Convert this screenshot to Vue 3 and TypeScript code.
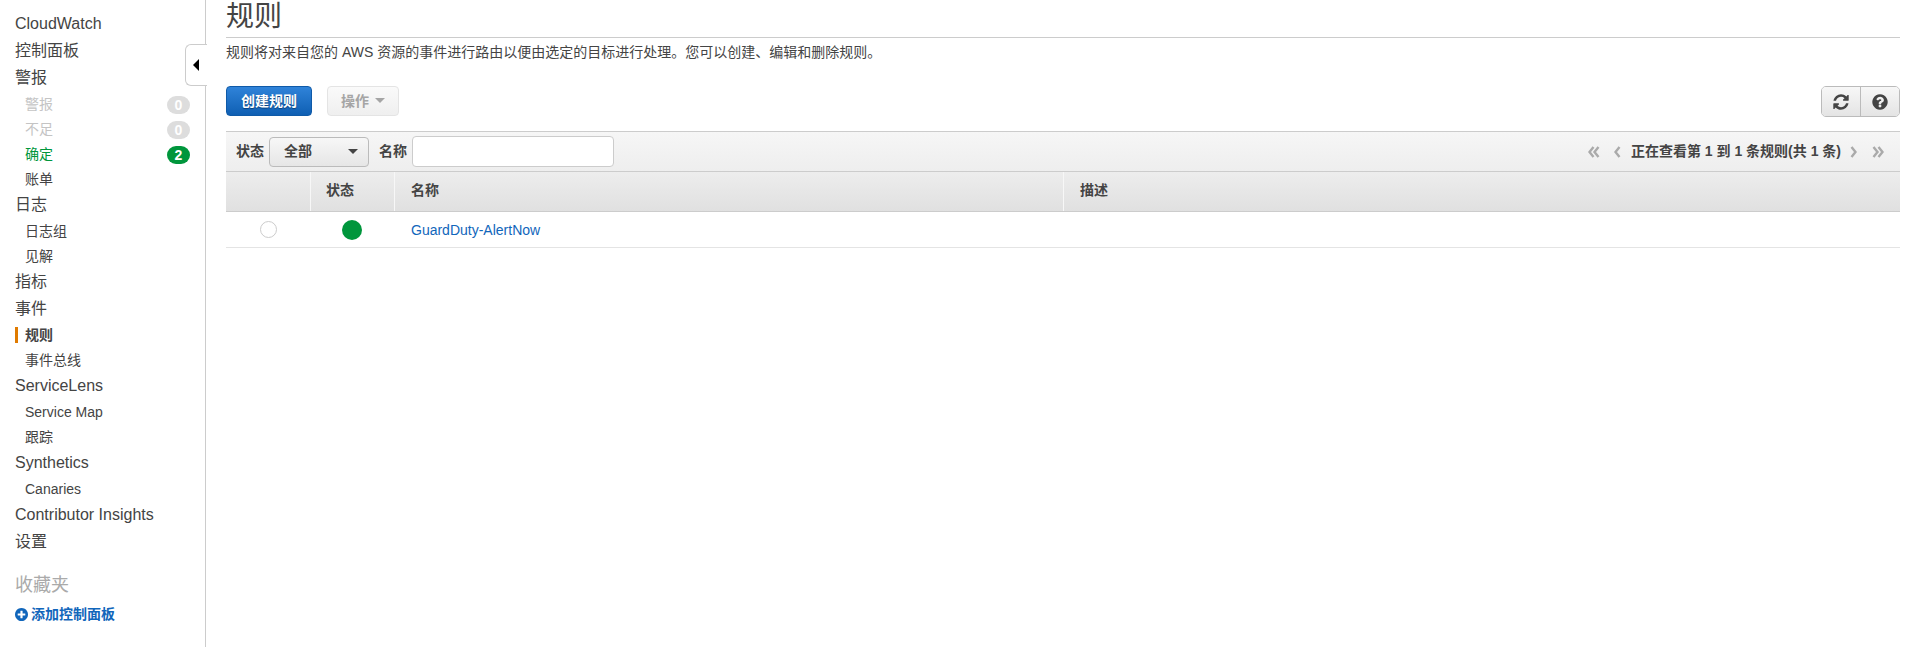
<script setup lang="ts">
interface NavItem {
  label: string
  sub?: boolean
  tone?: 'muted' | 'ok'
  badge?: number
  active?: boolean
}

const nav: NavItem[] = [
  { label: 'CloudWatch' },
  { label: '控制面板' },
  { label: '警报' },
  { label: '警报', sub: true, tone: 'muted', badge: 0 },
  { label: '不足', sub: true, tone: 'muted', badge: 0 },
  { label: '确定', sub: true, tone: 'ok', badge: 2 },
  { label: '账单', sub: true },
  { label: '日志' },
  { label: '日志组', sub: true },
  { label: '见解', sub: true },
  { label: '指标' },
  { label: '事件' },
  { label: '规则', sub: true, active: true },
  { label: '事件总线', sub: true },
  { label: 'ServiceLens' },
  { label: 'Service Map', sub: true },
  { label: '跟踪', sub: true },
  { label: 'Synthetics' },
  { label: 'Canaries', sub: true },
  { label: 'Contributor Insights' },
  { label: '设置' }
]
</script>

<template>
  <div class="page">
    <aside class="sidebar">
      <nav class="nav">
        <div
          v-for="(item, i) in nav"
          :key="i"
          class="nav-item"
          :class="{ sub: item.sub, top: !item.sub, muted: item.tone === 'muted', ok: item.tone === 'ok', active: item.active }"
        >
          <span class="nav-label">{{ item.label }}</span>
          <span v-if="item.badge !== undefined" class="badge" :class="{ 'badge-ok': item.tone === 'ok' }">{{ item.badge }}</span>
        </div>
      </nav>
      <div class="fav-title">收藏夹</div>
      <div class="fav-add">
        <svg class="plus" viewBox="128 128 1536 1536" aria-hidden="true">
          <path fill="#1166bb" d="M1344 960v-128q0-26-19-45t-45-19h-256v-256q0-26-19-45t-45-19h-128q-26 0-45 19t-19 45v256h-256q-26 0-45 19t-19 45v128q0 26 19 45t45 19h256v256q0 26 19 45t45 19h128q26 0 45-19t19-45v-256h256q26 0 45-19t19-45zm320-64q0 209-103 385.5t-279.5 279.5-385.5 103-385.5-103-279.5-279.5-103-385.5 103-385.5 279.5-279.5 385.5-103 385.5 103 279.5 279.5 103 385.5z" />
        </svg>
        <span>添加控制面板</span>
      </div>
      <div class="collapse-tab"><span class="collapse-arrow"></span></div>
    </aside>

    <main class="main">
      <h1 class="title">规则</h1>
      <p class="desc">规则将对来自您的 AWS 资源的事件进行路由以便由选定的目标进行处理。您可以创建、编辑和删除规则。</p>

      <div class="actions">
        <button class="btn-primary" type="button">创建规则</button>
        <button class="btn-disabled" type="button">操作<span class="caret caret-light"></span></button>
        <div class="spacer"></div>
        <div class="btn-group">
          <button class="btn-icon" type="button" aria-label="刷新">
            <svg viewBox="0 0 1792 1792" aria-hidden="true"><path fill="#444" d="M1639 1056q0 5-1 7-64 268-268 434.5t-478 166.5q-146 0-282.5-55t-243.5-157l-129 129q-19 19-45 19t-45-19-19-45v-448q0-26 19-45t45-19h448q26 0 45 19t19 45-19 45l-137 137q71 66 161 102t187 36q134 0 250-65t186-179q11-17 53-117 8-23 30-23h192q13 0 22.5 9.5t9.5 22.5zm25-800v448q0 26-19 45t-45 19h-448q-26 0-45-19t-19-45 19-45l138-138q-148-137-349-137-134 0-250 65t-186 179q-11 17-53 117-8 23-30 23h-199q-13 0-22.5-9.5t-9.5-22.5v-7q65-268 270-434.5t480-166.5q146 0 284 55.5t245 156.5l130-129q19-19 45-19t45 19 19 45z" /></svg>
          </button>
          <button class="btn-icon" type="button" aria-label="帮助">
            <svg viewBox="0 0 1792 1792" aria-hidden="true"><path fill="#444" d="M1024 1376v-192q0-14-9-23t-23-9h-192q-14 0-23 9t-9 23v192q0 14 9 23t23 9h192q14 0 23-9t9-23zm256-672q0-88-55.5-163t-138.5-116-170-41q-243 0-371 213-15 24 8 42l132 100q7 6 19 6 16 0 25-12 53-68 86-92 34-24 86-24 48 0 85.5 26t37.5 59q0 38-20 61t-68 45q-63 28-115.5 86.5t-52.5 125.5v36q0 14 9 23t23 9h192q14 0 23-9t9-23q0-19 21.5-49.5t54.5-49.5q32-18 49-28.5t46-35 44.5-48 28-60.5 12.5-81zm384 192q0 209-103 385.5t-279.5 279.5-385.5 103-385.5-103-279.5-279.5-103-385.5 103-385.5 279.5-279.5 385.5-103 385.5 103 279.5 279.5 103 385.5z" /></svg>
          </button>
        </div>
      </div>

      <section class="table">
        <div class="filter-bar">
          <label class="filter-label">状态</label>
          <div class="select"><span class="select-text">全部</span><span class="caret"></span></div>
          <label class="filter-label name-label">名称</label>
          <div class="input"></div>
          <div class="spacer"></div>
          <div class="pager">
            <svg class="pg" viewBox="0 0 12 12" aria-hidden="true"><path d="M5.500 1 1.500 6l4 5M10.500 1l-4 5 4 5" /></svg>
            <svg class="pg pg-single" viewBox="0 0 7 12" aria-hidden="true"><path d="M5.500 1 1.500 6l4 5" /></svg>
            <span class="pg-text">正在查看第 1 到 1 条规则(共 1 条)</span>
            <svg class="pg pg-single pg-next" viewBox="0 0 7 12" aria-hidden="true"><path d="M1.500 1l4 5-4 5" /></svg>
            <svg class="pg" viewBox="0 0 12 12" aria-hidden="true"><path d="M1.500 1l4 5-4 5M6.500 1l4 5-4 5" /></svg>
          </div>
        </div>
        <div class="thead">
          <div class="th"></div>
          <div class="th name">状态</div>
          <div class="th name">名称</div>
          <div class="th name">描述</div>
        </div>
        <div class="tr">
          <div class="td center"><span class="radio"></span></div>
          <div class="td center"><span class="dot"></span></div>
          <div class="td name"><a class="link">GuardDuty-AlertNow</a></div>
          <div class="td"></div>
        </div>
      </section>
    </main>
  </div>
</template>

<style scoped>
.page {
  display: flex;
  height: 647px;
  overflow: hidden;
  background: #fff;
  color: #444;
  font-family: "Liberation Sans", "Noto Sans CJK SC", sans-serif;
}

.sidebar {
  position: relative;
  box-sizing: border-box;
  width: 206px;
  flex: none;
  border-right: 1px solid #ccc;
  padding: 11px 15px 0;
}

.nav-item {
  display: flex;
  align-items: center;
  justify-content: space-between;
  height: 25px;
  line-height: 25px;
}

.nav-item.top {
  font-size: 16px;
  margin-bottom: 2px;
}

.nav-item.sub {
  font-size: 14px;
  padding-left: 10px;
}

.nav-item.muted .nav-label {
  color: #c4c4c4;
}

.nav-item.ok .nav-label {
  color: #00963c;
}

.nav-item.active {
  position: relative;
  font-weight: 700;
}

.nav-item.active::before {
  content: "";
  position: absolute;
  left: 0;
  top: 4px;
  width: 3px;
  height: 16px;
  background: #e07b00;
}

.badge {
  box-sizing: border-box;
  width: 23px;
  height: 18px;
  border-radius: 9px;
  background: #ddd;
  color: #fff;
  font-size: 14px;
  font-weight: 700;
  line-height: 18px;
  text-align: center;
}

.badge-ok {
  background: #00963c;
}

.fav-title {
  margin-top: 18px;
  color: #aaa;
  font-size: 18px;
  line-height: 26px;
}

.fav-add {
  display: flex;
  align-items: center;
  gap: 3px;
  margin-top: 4px;
  color: #1166bb;
  font-size: 14px;
  font-weight: 700;
  line-height: 24px;
}

.plus {
  width: 13px;
  height: 13px;
  flex: none;
}

.collapse-tab {
  position: absolute;
  left: 185px;
  top: 44px;
  box-sizing: border-box;
  width: 22px;
  height: 42px;
  background: #fff;
  border: 1px solid #ccc;
  border-right: none;
  border-radius: 6px 0 0 6px;
}

.collapse-arrow {
  position: absolute;
  left: 7px;
  top: 14px;
  width: 0;
  height: 0;
  border-top: 6px solid transparent;
  border-bottom: 6px solid transparent;
  border-right: 6px solid #000;
}

.main {
  flex: 1;
  min-width: 0;
  padding: 0 20px;
}

.title {
  box-sizing: content-box;
  height: 37px;
  margin: 0;
  border-bottom: 1px solid #ccc;
  font-size: 28px;
  font-weight: 400;
  line-height: 34px;
}

.desc {
  margin: 0;
  padding-top: 4px;
  font-size: 14px;
  line-height: 20px;
}

.actions {
  display: flex;
  align-items: flex-start;
  margin-top: 24px;
  height: 30px;
}

.spacer {
  flex: 1;
}

button {
  font-family: inherit;
  padding: 0;
  cursor: pointer;
}

.btn-primary {
  box-sizing: border-box;
  width: 86px;
  height: 30px;
  padding-bottom: 2px;
  border: 1px solid #0f5aa8;
  border-radius: 4px;
  background: linear-gradient(#2f83d9, #0f5fb3);
  color: #fff;
  font-size: 14px;
  font-weight: 700;
  text-shadow: 0 1px 1px #0a3f7a;
}

.btn-disabled {
  display: flex;
  align-items: center;
  justify-content: center;
  gap: 6px;
  box-sizing: border-box;
  width: 72px;
  height: 30px;
  margin-left: 15px;
  padding-bottom: 2px;
  border: 1px solid #e4e4e4;
  border-radius: 4px;
  background: linear-gradient(#fafafa, #efefef);
  color: #a5a5a5;
  font-size: 14px;
  font-weight: 700;
}

.caret {
  width: 0;
  height: 0;
  border-left: 5px solid transparent;
  border-right: 5px solid transparent;
  border-top: 5px solid #444;
}

.caret-light {
  border-top-color: #a5a5a5;
}

.btn-group {
  display: flex;
  box-sizing: border-box;
  width: 79px;
  height: 31px;
  border: 1px solid #bbb;
  border-radius: 5px;
  overflow: hidden;
}

.btn-icon {
  display: flex;
  align-items: center;
  justify-content: center;
  flex: 1;
  border: none;
  background: linear-gradient(#f7f7f7, #e4e4e4);
}

.btn-icon + .btn-icon {
  border-left: 1px solid #bbb;
}

.btn-icon svg {
  width: 18px;
  height: 18px;
}

.table {
  margin-top: 15px;
}

.filter-bar {
  display: flex;
  align-items: center;
  box-sizing: border-box;
  height: 41px;
  padding: 0 16px 0 10px;
  border-top: 1px solid #ccc;
  border-bottom: 1px solid #ccc;
  background: linear-gradient(#f6f6f6, #eee);
  font-size: 14px;
  font-weight: 700;
}

.filter-label,
.select-text {
  line-height: 20px;
  padding-bottom: 2px;
}

.name-label {
  margin-left: 10px;
}

.select {
  display: flex;
  align-items: center;
  justify-content: space-between;
  box-sizing: border-box;
  width: 100px;
  height: 30px;
  margin-left: 5px;
  padding: 0 10px 0 14px;
  border: 1px solid #bbb;
  border-radius: 4px;
  background: linear-gradient(#f7f7f7, #e6e6e6);
}

.input {
  box-sizing: border-box;
  width: 202px;
  height: 31px;
  margin-left: 5px;
  border: 1px solid #ccc;
  border-radius: 4px;
  background: #fff;
}

.pager {
  display: flex;
  align-items: center;
}

.pg {
  width: 12px;
  height: 12px;
  fill: none;
  stroke: #aaa;
  stroke-width: 2.4;
}

.pg-single {
  width: 7px;
  margin: 0 10px 0 14px;
}

.pg-next {
  margin: 0 15px 0 9px;
}

.pg-text {
  color: #444;
  font-size: 14px;
  line-height: 20px;
  padding-bottom: 2px;
  white-space: nowrap;
}

.thead,
.tr {
  display: grid;
  grid-template-columns: 84px 84px 669px 1fr;
}

.thead {
  height: 40px;
  border-bottom: 1px solid #ccc;
  box-sizing: border-box;
  background: linear-gradient(#ededed, #e0e0e0);
}

.th {
  box-sizing: border-box;
  border-left: 1px solid #f7f7f7;
  font-size: 14px;
  font-weight: 700;
  line-height: 36px;
}

.th:first-child {
  border-left: none;
}

.th.name {
  padding-left: 15px;
}

.thead .th:nth-child(3),
.thead .th:nth-child(4) {
  padding-left: 16px;
}

.tr {
  height: 36px;
  box-sizing: border-box;
  border-bottom: 1px solid #e4e4e4;
}

.td {
  display: flex;
  align-items: center;
  font-size: 14px;
}

.td.center {
  justify-content: center;
}

.td.name {
  padding-left: 17px;
}

.radio {
  box-sizing: border-box;
  width: 17px;
  height: 17px;
  border: 1px solid #ccc;
  border-radius: 50%;
  background: #fff;
}

.dot {
  width: 20px;
  height: 20px;
  border-radius: 50%;
  background: #00963c;
}

.link {
  color: #1166bb;
}
</style>
